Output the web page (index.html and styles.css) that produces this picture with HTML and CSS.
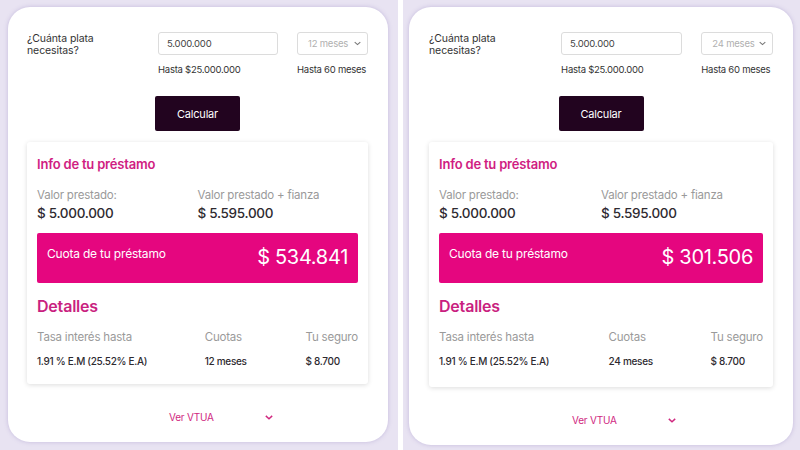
FILE: index.html
```html
<!DOCTYPE html>
<html lang="es">
<head>
<meta charset="utf-8">
<link rel="stylesheet" href="styles.css">
</head>
<body>
<div class="screen">
  <section class="panel panel-left">
    <div class="card">
      <div class="form">
        <div class="q">¿Cuánta plata<br>necesitas?</div>
        <div class="input">5.000.000</div>
        <div class="select"><span>12 meses</span><svg class="chev" viewBox="0 0 10 6" width="7" height="5"><path d="M1 1l4 3.5L9 1" fill="none" stroke="#777" stroke-width="1.6"/></svg></div>
        <div></div>
        <div class="hint">Hasta $25.000.000</div>
        <div class="hint">Hasta 60 meses</div>
      </div>
      <div class="btn-row"><button class="btn">Calcular</button></div>
      <div class="info">
        <h2 class="info-title">Info de tu préstamo</h2>
        <div class="vals">
          <div><div class="lab">Valor prestado:</div><div class="amt">$ 5.000.000</div></div>
          <div><div class="lab">Valor prestado + fianza</div><div class="amt">$ 5.595.000</div></div>
        </div>
        <div class="cuota"><span class="cuota-lab">Cuota de tu préstamo</span><span class="cuota-amt">$ 534.841</span></div>
        <h2 class="det-title">Detalles</h2>
        <div class="det">
          <div class="lab">Tasa interés hasta</div><div class="lab">Cuotas</div><div class="lab">Tu seguro</div>
          <div class="dv">1.91 % E.M (25.52% E.A)</div><div class="dv">12 meses</div><div class="dv">$ 8.700</div>
        </div>
      </div>
      <div class="vtua"><span>Ver VTUA</span><svg viewBox="0 0 10 6" width="8" height="5"><path d="M1 1l4 3.5L9 1" fill="none" stroke="#d0287f" stroke-width="1.8"/></svg></div>
    </div>
  </section>
  <section class="panel panel-right">
    <div class="card">
      <div class="form">
        <div class="q">¿Cuánta plata<br>necesitas?</div>
        <div class="input">5.000.000</div>
        <div class="select"><span>24 meses</span><svg class="chev" viewBox="0 0 10 6" width="7" height="5"><path d="M1 1l4 3.5L9 1" fill="none" stroke="#777" stroke-width="1.6"/></svg></div>
        <div></div>
        <div class="hint">Hasta $25.000.000</div>
        <div class="hint">Hasta 60 meses</div>
      </div>
      <div class="btn-row"><button class="btn">Calcular</button></div>
      <div class="info">
        <h2 class="info-title">Info de tu préstamo</h2>
        <div class="vals">
          <div><div class="lab">Valor prestado:</div><div class="amt">$ 5.000.000</div></div>
          <div><div class="lab">Valor prestado + fianza</div><div class="amt">$ 5.595.000</div></div>
        </div>
        <div class="cuota"><span class="cuota-lab">Cuota de tu préstamo</span><span class="cuota-amt">$ 301.506</span></div>
        <h2 class="det-title">Detalles</h2>
        <div class="det">
          <div class="lab">Tasa interés hasta</div><div class="lab">Cuotas</div><div class="lab">Tu seguro</div>
          <div class="dv">1.91 % E.M (25.52% E.A)</div><div class="dv">24 meses</div><div class="dv">$ 8.700</div>
        </div>
      </div>
      <div class="vtua"><span>Ver VTUA</span><svg viewBox="0 0 10 6" width="8" height="5"><path d="M1 1l4 3.5L9 1" fill="none" stroke="#d0287f" stroke-width="1.8"/></svg></div>
    </div>
  </section>
</div>
</body>
</html>
```

FILE: styles.css
```css
* { box-sizing: border-box; }
html, body { margin: 0; padding: 0; }
body {
  background: #ffffff;
  font-family: Inter, "Noto Sans", sans-serif;
  color: #2e2a30;
  width: 800px;
  height: 450px;
  overflow: hidden;
}
.screen {
  display: flex;
  gap: 5px;
  height: 450px;
}
.panel {
  background: #e8e3f2;
  height: 450px;
}
.panel-left { width: 398px; padding: 7px 0 0 8px; }
.panel-right { width: 397px; padding: 7px 0 0 6px; }
.card {
  background: #fff;
  border-radius: 22px;
  box-shadow: 0 0 4px rgba(130, 110, 180, 0.35);
  padding: 25px 20px 0 19px;
}
.panel-left .card { width: 380px; height: 435px; }
.panel-right .card { width: 384px; height: 438px; padding-left: 20px; }

.form {
  display: grid;
  grid-template-columns: 112fr 120fr 71fr;
  column-gap: 19px;
  row-gap: 8px;
  align-items: start;
}
.q {
  font-size: 10.5px;
  line-height: 11.5px;
  padding-top: 1px;
  color: #333;
  letter-spacing: -0.1px;
}
.input, .select {
  height: 23px;
  border: 1px solid #dcdcdc;
  border-radius: 3px;
  font-size: 9.5px;
  display: flex;
  align-items: center;
  letter-spacing: -0.2px;
}
.input { padding-left: 8px; color: #444; }
.select { padding: 0 6px 0 10px; color: #b0b0b0; justify-content: space-between; }
.hint {
  font-size: 9.5px;
  line-height: 12px;
  color: #333;
  white-space: nowrap;
  letter-spacing: -0.25px;
}

.btn-row { display: flex; justify-content: center; margin-top: 20px; }
.btn {
  width: 85px;
  height: 35px;
  border: 0;
  border-radius: 2px;
  background: #22041f;
  color: #fff;
  font-family: Inter, "Noto Sans", sans-serif;
  font-size: 11px;
  letter-spacing: -0.2px;
  padding: 0;
}

.info {
  margin-top: 11px;
  background: #fff;
  border-radius: 3px;
  box-shadow: 0 1px 5px rgba(0, 0, 0, 0.14);
  padding: 14px 10px 0 10px;
  height: 242px;
}
.panel-right .info { height: 245px; }
.info-title {
  margin: 0;
  font-size: 13px;
  line-height: 16px;
  font-weight: 600;
  color: #d01d82;
  letter-spacing: -0.2px;
}
.vals {
  display: grid;
  grid-template-columns: 1fr 1fr;
  margin-top: 15px;
}
.lab {
  font-size: 11.5px;
  line-height: 16px;
  color: #9a9a9a;
  white-space: nowrap;
  letter-spacing: -0.2px;
}
.amt {
  font-size: 13.5px;
  line-height: 18px;
  color: #2e2a30;
  font-weight: 500;
  margin-top: 1px;
  letter-spacing: -0.3px;
}
.cuota {
  margin-top: 11px;
  height: 50px;
  background: #e5067f;
  border-radius: 2px;
  display: flex;
  justify-content: space-between;
  padding: 0 10px;
  color: #fff;
}
.cuota-lab { font-size: 12px; padding-top: 13px; letter-spacing: -0.2px; }
.cuota-amt { font-size: 20px; padding-top: 12px; letter-spacing: -0.3px; }
.det-title {
  margin: 13px 0 0 0;
  font-size: 16px;
  line-height: 20px;
  font-weight: 600;
  color: #c91f80;
  letter-spacing: -0.2px;
}
.det {
  display: grid;
  grid-template-columns: 168fr 101fr 52fr;
  margin-top: 13px;
  row-gap: 9px;
}
.dv {
  font-size: 10px;
  line-height: 14px;
  color: #2e2a30;
  font-weight: 500;
  white-space: nowrap;
  letter-spacing: -0.3px;
}

.vtua {
  display: flex;
  align-items: center;
  gap: 51px;
  padding-left: 142px;
  margin-top: 27px;
  font-size: 10px;
  letter-spacing: -0.2px;
  color: #d0287f;
}
.panel-right .vtua { padding-left: 143px; }
```
